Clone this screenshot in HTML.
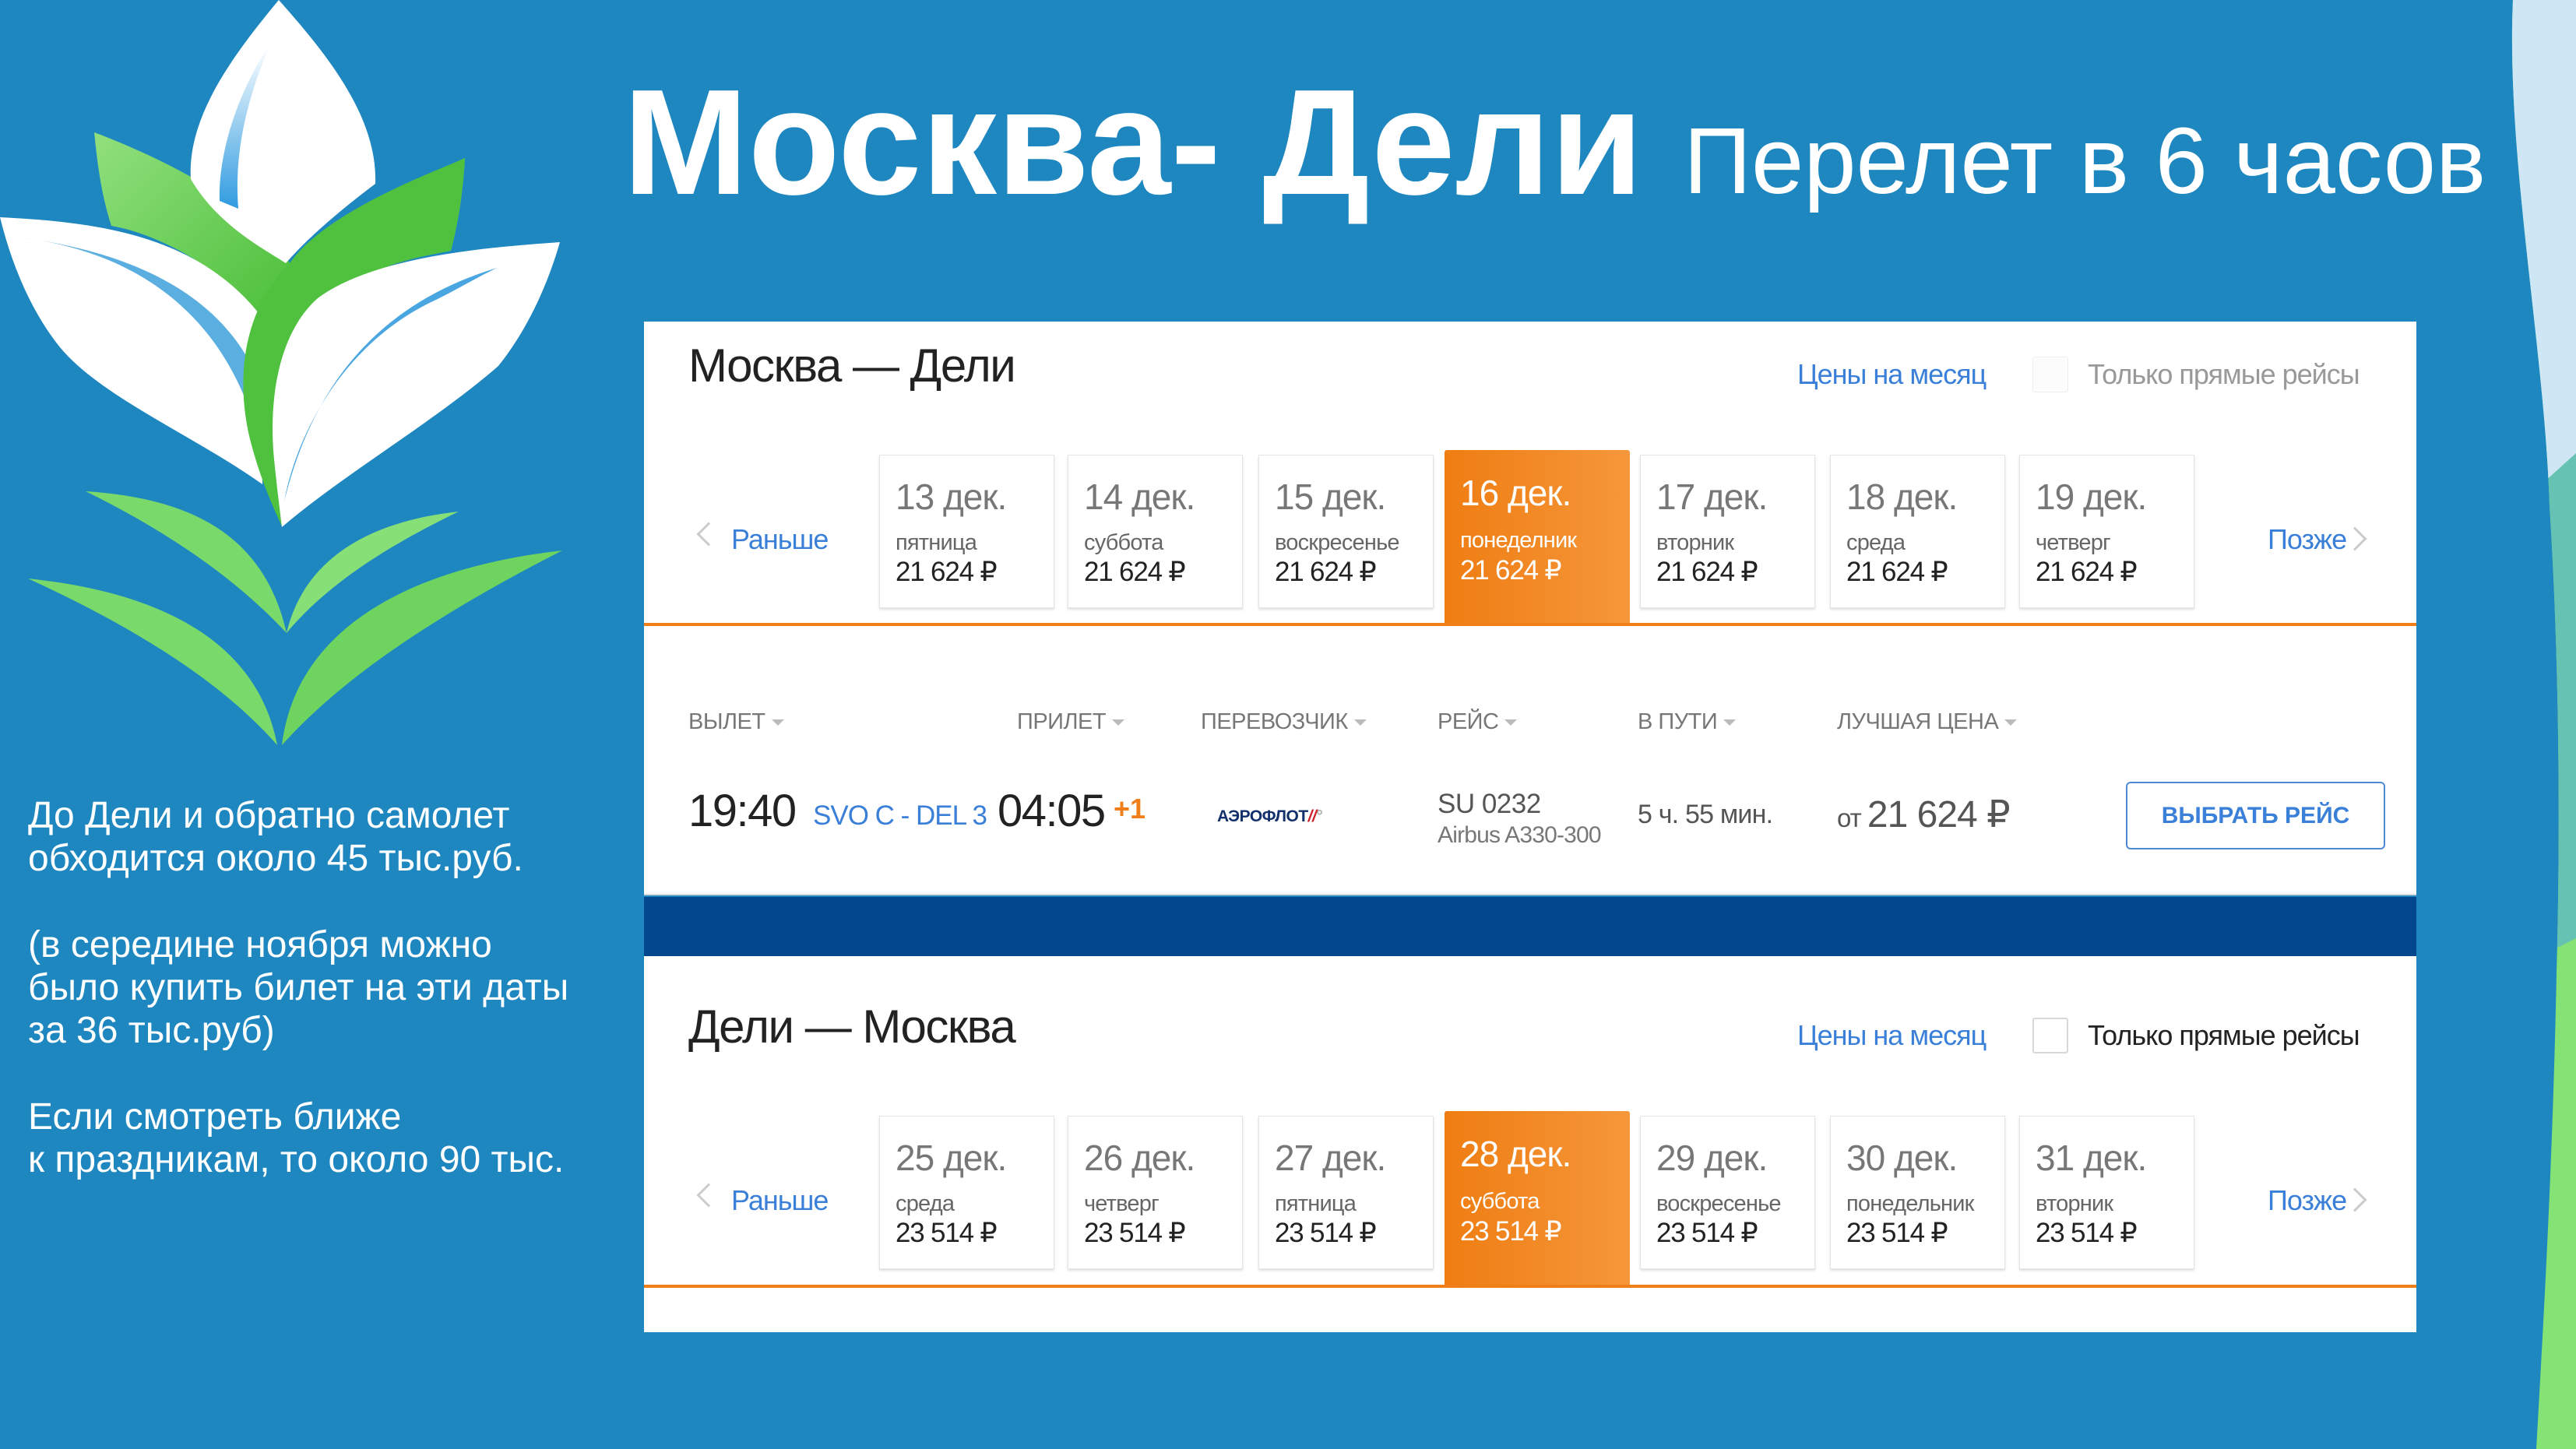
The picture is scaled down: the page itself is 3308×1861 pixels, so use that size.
<!DOCTYPE html>
<html><head><meta charset="utf-8">
<style>
*{margin:0;padding:0;box-sizing:border-box}
body{width:3308px;height:1861px;background:#1f87c0;position:relative;overflow:hidden;font-family:"Liberation Sans",Arial,sans-serif}
.a{position:absolute;white-space:nowrap;line-height:1}
.card{position:absolute;left:827px;width:2276px;background:#fff;overflow:hidden}
.tile{position:absolute;width:225px;height:197px;background:#fff;border:1px solid #e2e6ea;box-shadow:0 2px 3px rgba(0,0,0,.13)}
.sel{position:absolute;width:238px;height:224px;background:linear-gradient(90deg,#ef7d12,#f5973b);border-radius:3px 3px 0 0}
.d{position:absolute;left:20px;top:26px;font-size:46px;color:#777;letter-spacing:-1px}
.w{position:absolute;left:20px;top:96px;font-size:29px;color:#666;letter-spacing:-.8px}
.p{position:absolute;left:20px;top:130px;font-size:35px;color:#222;letter-spacing:-1.2px}
.sel .d,.sel .w,.sel .p{color:#fff}
.h{font-size:29px;color:#777;letter-spacing:-.5px}
.h:after{content:"";display:inline-block;margin-left:8px;border-left:8px solid transparent;border-right:8px solid transparent;border-top:8px solid #bbb;vertical-align:middle}
.blue{color:#3a7fd8}
.t36{font-size:36px;letter-spacing:-1px}
</style></head><body>

<svg class="a" style="left:0;top:0" width="3308" height="1861">
<defs><clipPath id="rc"><path d="M3227,0 C3218,200 3268,450 3274,650 C3290,900 3286,1150 3283,1250 C3278,1500 3266,1700 3257,1861 L3308,1861 L3308,0Z"/></clipPath>
<linearGradient id="gl" x1="0" y1="0" x2="1" y2="1"><stop offset="0" stop-color="#92e07e"/><stop offset="1" stop-color="#4cbf3a"/></linearGradient>
<linearGradient id="bl" x1="0" y1="0" x2="0" y2="1"><stop offset="0" stop-color="#fff"/><stop offset="1" stop-color="#2f9be0"/></linearGradient>
</defs>
<g clip-path="url(#rc)">
<rect x="3200" y="0" width="108" height="1861" fill="#84e374"/>
<polygon points="3200,0 3308,0 3308,1205 3200,1260" fill="#66c2b2"/>
<polygon points="3200,0 3308,0 3308,582 3200,680" fill="#cfe6f5"/>
</g>
<path d="M121,170 C200,200 330,260 372,338 L337,408 C280,340 200,300 143,290 C130,250 125,210 121,170Z" fill="url(#gl)"/>
<path d="M597,203 C520,240 420,280 372,338 L408,383 C470,340 540,330 579,322 C590,280 595,240 597,203Z" fill="#84dc78"/>
<path d="M358,0 C300,70 240,150 245,230 C280,290 340,320 367,338 C400,300 450,260 482,236 C485,150 420,70 358,0Z" fill="#fff"/>
<path d="M347,57 C310,110 280,190 282,258 L306,268 C300,190 320,120 347,57Z" fill="url(#bl)"/>
<path d="M0,279 C120,285 250,300 332,402 L337,622 C250,560 130,510 77,446 C40,400 15,340 0,279Z" fill="#fff"/>
<path d="M26,305 C150,320 260,380 314,510 L318,460 C260,360 140,320 26,305Z" fill="#5aaee0"/>
<path d="M597,203 C560,220 420,270 372,338 C320,390 300,470 320,560 C335,620 355,660 362,676 C355,600 360,480 420,390 C470,340 540,330 579,322 C590,280 595,240 597,203Z" fill="#4fc13f"/>
<path d="M719,311 C620,318 480,330 408,383 C355,430 345,520 352,590 C356,630 360,660 362,677 C440,610 560,540 640,470 C680,420 705,360 719,311Z" fill="#fff"/>
<path d="M638,344 C520,380 410,460 365,644 C380,560 440,440 560,385 C590,370 615,355 638,344Z" fill="#4aa6e0"/>
<path d="M110,631 C250,640 340,690 368,813 C300,740 210,680 110,631Z" fill="#79d96a"/>
<path d="M589,657 C470,670 390,720 368,813 C420,750 500,700 589,657Z" fill="#86df77"/>
<path d="M36,743 C200,760 330,820 356,957 C280,870 160,800 36,743Z" fill="#79d96a"/>
<path d="M722,707 C520,730 380,810 362,957 C440,870 560,790 722,707Z" fill="#6fd45f"/>
</svg>

<div class="a" style="left:800px;top:86px;font-size:193px;font-weight:bold;color:#fff">Москва- Дели</div>
<div class="a" style="left:2162px;top:146px;font-size:121px;color:#fff">Перелет в 6 часов</div>

<div class="a" style="left:36px;top:1020px;font-size:48px;line-height:55.3px;color:#fff;white-space:pre">До Дели и обратно самолет
обходится около 45 тыс.руб.

(в середине ноября можно
было купить билет на эти даты
за 36 тыс.руб)

Если смотреть ближе
к праздникам, то около 90 тыс.</div>

<div class="card" style="top:413px;height:737px;border-bottom:2px solid #d5d9de">
 <div class="a" style="left:57px;top:27px;font-size:60px;color:#222;letter-spacing:-1.5px">Москва — Дели</div>
 <div class="a blue t36" style="left:1481px;top:50px">Цены на месяц</div>
 <div class="a" style="left:1783px;top:45px;width:46px;height:46px;border:1px solid #eee;border-radius:3px;background:#fcfcfc"></div>
 <div class="a t36" style="left:1854px;top:50px;color:#999">Только прямые рейсы</div>

 <div class="a" style="left:72px;top:262px;width:22px;height:22px;border-left:3px solid #ccc;border-bottom:3px solid #ccc;transform:rotate(45deg)"></div>
 <div class="a blue t36" style="left:112px;top:262px">Раньше</div>
 <div class="tile" style="left:302px;top:171px"><div class="d">13 дек.</div><div class="w">пятница</div><div class="p">21 624 ₽</div></div>
 <div class="tile" style="left:544px;top:171px"><div class="d">14 дек.</div><div class="w">суббота</div><div class="p">21 624 ₽</div></div>
 <div class="tile" style="left:789px;top:171px"><div class="d">15 дек.</div><div class="w">воскресенье</div><div class="p">21 624 ₽</div></div>
 <div class="sel" style="left:1028px;top:165px"><div class="d" style="top:28px">16 дек.</div><div class="w" style="top:100px">понеделник</div><div class="p" style="top:135px">21 624 ₽</div></div>
 <div class="tile" style="left:1279px;top:171px"><div class="d">17 дек.</div><div class="w">вторник</div><div class="p">21 624 ₽</div></div>
 <div class="tile" style="left:1523px;top:171px"><div class="d">18 дек.</div><div class="w">среда</div><div class="p">21 624 ₽</div></div>
 <div class="tile" style="left:1766px;top:171px"><div class="d">19 дек.</div><div class="w">четверг</div><div class="p">21 624 ₽</div></div>
 <div class="a blue t36" style="left:2085px;top:262px">Позже</div>
 <div class="a" style="left:2186px;top:268px;width:22px;height:22px;border-right:3px solid #ccc;border-top:3px solid #ccc;transform:rotate(45deg)"></div>
 <div class="a" style="left:0;top:387px;width:2276px;height:4px;background:#f07f1a"></div>

 <div class="a h" style="left:57px;top:500px">ВЫЛЕТ</div>
 <div class="a h" style="left:479px;top:500px">ПРИЛЕТ</div>
 <div class="a h" style="left:715px;top:500px">ПЕРЕВОЗЧИК</div>
 <div class="a h" style="left:1019px;top:500px">РЕЙС</div>
 <div class="a h" style="left:1276px;top:500px">В ПУТИ</div>
 <div class="a h" style="left:1532px;top:500px">ЛУЧШАЯ ЦЕНА</div>

 <div class="a" style="left:57px;top:600px;font-size:58px;color:#222;letter-spacing:-1.5px">19:40</div>
 <div class="a blue" style="left:217px;top:617px;font-size:35px;letter-spacing:-1px">SVO C - DEL 3</div>
 <div class="a" style="left:454px;top:600px;font-size:58px;color:#222;letter-spacing:-1.5px">04:05</div>
 <div class="a" style="left:603px;top:608px;font-size:36px;font-weight:bold;color:#f07f1a">+1</div>
 <div class="a" style="left:736px;top:625px;font-size:21px;font-weight:bold;color:#12306b;letter-spacing:-.5px">АЭРОФЛОТ<span style="color:#d0202a;font-style:italic">//</span><span style="color:#aaa">°</span></div>
 <div class="a" style="left:1019px;top:602px;font-size:35px;color:#555;letter-spacing:-.5px">SU 0232</div>
 <div class="a" style="left:1019px;top:645px;font-size:30px;color:#777;letter-spacing:-.8px">Airbus A330-300</div>
 <div class="a" style="left:1276px;top:616px;font-size:34px;color:#555;letter-spacing:-.8px">5 ч. 55 мин.</div>
 <div class="a" style="left:1532px;top:610px;color:#555;letter-spacing:-1px"><span style="font-size:33px">от </span><span style="font-size:48px">21 624 ₽</span></div>
 <div class="a" style="left:1903px;top:591px;width:333px;height:87px;border:2px solid #4d8ad6;border-radius:6px;text-align:center;line-height:83px;font-size:30px;font-weight:bold;color:#3a7fd8">ВЫБРАТЬ РЕЙС</div>
</div>

<div class="a" style="left:827px;top:1152px;width:2276px;height:76px;background:#03478c"></div>

<div class="card" style="top:1228px;height:483px">
 <div class="a" style="left:57px;top:61px;font-size:60px;color:#222;letter-spacing:-1.5px">Дели — Москва</div>
 <div class="a blue t36" style="left:1481px;top:84px">Цены на месяц</div>
 <div class="a" style="left:1783px;top:79px;width:46px;height:46px;border:2px solid #d8d8d8;border-radius:3px;background:#fff"></div>
 <div class="a t36" style="left:1854px;top:84px;color:#222">Только прямые рейсы</div>

 <div class="a" style="left:72px;top:296px;width:22px;height:22px;border-left:3px solid #ccc;border-bottom:3px solid #ccc;transform:rotate(45deg)"></div>
 <div class="a blue t36" style="left:112px;top:296px">Раньше</div>
 <div class="tile" style="left:302px;top:205px"><div class="d">25 дек.</div><div class="w">среда</div><div class="p">23 514 ₽</div></div>
 <div class="tile" style="left:544px;top:205px"><div class="d">26 дек.</div><div class="w">четверг</div><div class="p">23 514 ₽</div></div>
 <div class="tile" style="left:789px;top:205px"><div class="d">27 дек.</div><div class="w">пятница</div><div class="p">23 514 ₽</div></div>
 <div class="sel" style="left:1028px;top:199px"><div class="d" style="top:28px">28 дек.</div><div class="w" style="top:100px">суббота</div><div class="p" style="top:135px">23 514 ₽</div></div>
 <div class="tile" style="left:1279px;top:205px"><div class="d">29 дек.</div><div class="w">воскресенье</div><div class="p">23 514 ₽</div></div>
 <div class="tile" style="left:1523px;top:205px"><div class="d">30 дек.</div><div class="w">понедельник</div><div class="p">23 514 ₽</div></div>
 <div class="tile" style="left:1766px;top:205px"><div class="d">31 дек.</div><div class="w">вторник</div><div class="p">23 514 ₽</div></div>
 <div class="a blue t36" style="left:2085px;top:296px">Позже</div>
 <div class="a" style="left:2186px;top:302px;width:22px;height:22px;border-right:3px solid #ccc;border-top:3px solid #ccc;transform:rotate(45deg)"></div>
 <div class="a" style="left:0;top:422px;width:2276px;height:4px;background:#f07f1a"></div>
</div>
</body></html>
